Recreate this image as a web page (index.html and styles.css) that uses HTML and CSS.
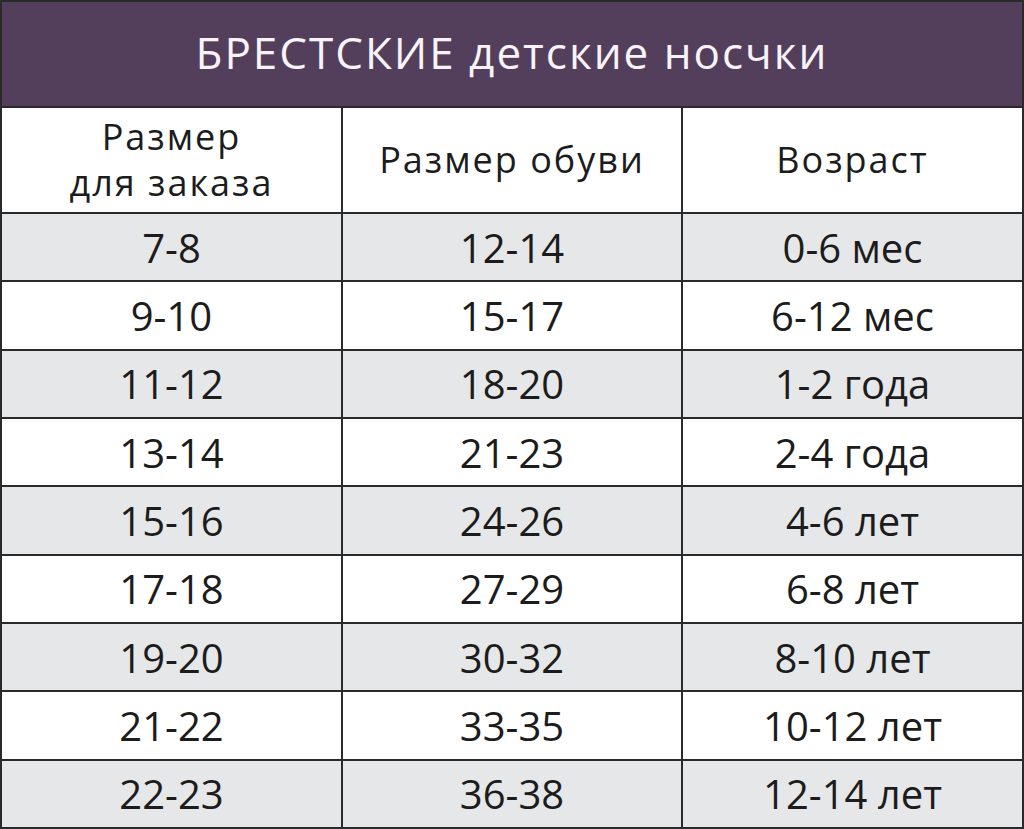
FILE: index.html
```html
<!DOCTYPE html>
<html lang="ru">
<head>
<meta charset="utf-8">
<title>БРЕСТСКИЕ детские носочки</title>
<link rel="stylesheet" href="styles.css">
</head>
<body>
<div class="sheet">
  <div class="title">БРЕСТСКИЕ детские носчки</div>
  <div class="cell head">Размер<br>для заказа</div>
  <div class="cell head">Размер обуви</div>
  <div class="cell head">Возраст</div>

  <div class="cell g">7-8</div><div class="cell g">12-14</div><div class="cell g">0-6 мес</div>
  <div class="cell">9-10</div><div class="cell">15-17</div><div class="cell">6-12 мес</div>
  <div class="cell g">11-12</div><div class="cell g">18-20</div><div class="cell g">1-2 года</div>
  <div class="cell">13-14</div><div class="cell">21-23</div><div class="cell">2-4 года</div>
  <div class="cell g">15-16</div><div class="cell g">24-26</div><div class="cell g">4-6 лет</div>
  <div class="cell">17-18</div><div class="cell">27-29</div><div class="cell">6-8 лет</div>
  <div class="cell g">19-20</div><div class="cell g">30-32</div><div class="cell g">8-10 лет</div>
  <div class="cell">21-22</div><div class="cell">33-35</div><div class="cell">10-12 лет</div>
  <div class="cell g">22-23</div><div class="cell g">36-38</div><div class="cell g">12-14 лет</div>
</div>
</body>
</html>
```

FILE: styles.css
```css
html, body {
  margin: 0;
  padding: 0;
  background: #ffffff;
}
.sheet {
  box-sizing: border-box;
  width: 1024px;
  height: 829px;
  padding: 2px;
  background: #2a2a2a;
  display: grid;
  grid-template-columns: 339px 338px 339px;
  grid-template-rows: 104px 104px repeat(9, 1fr);
  gap: 2px;
  font-family: "Open Sans", "Noto Sans", sans-serif;
  color: #1c1c1c;
}
.title {
  grid-column: 1 / 4;
  background: #533f5c;
  color: #f7f3f7;
  font-size: 44px;
  letter-spacing: 2px;
  display: flex;
  align-items: center;
  justify-content: center;
  padding-bottom: 4px;
  box-sizing: border-box;
}
.cell {
  background: #ffffff;
  display: flex;
  align-items: center;
  justify-content: center;
  text-align: center;
  font-size: 40px;
}
.cell.g {
  background: #e6e7e8;
}
.head {
  font-size: 36px;
  letter-spacing: 2px;
  line-height: 46px;
}
```
